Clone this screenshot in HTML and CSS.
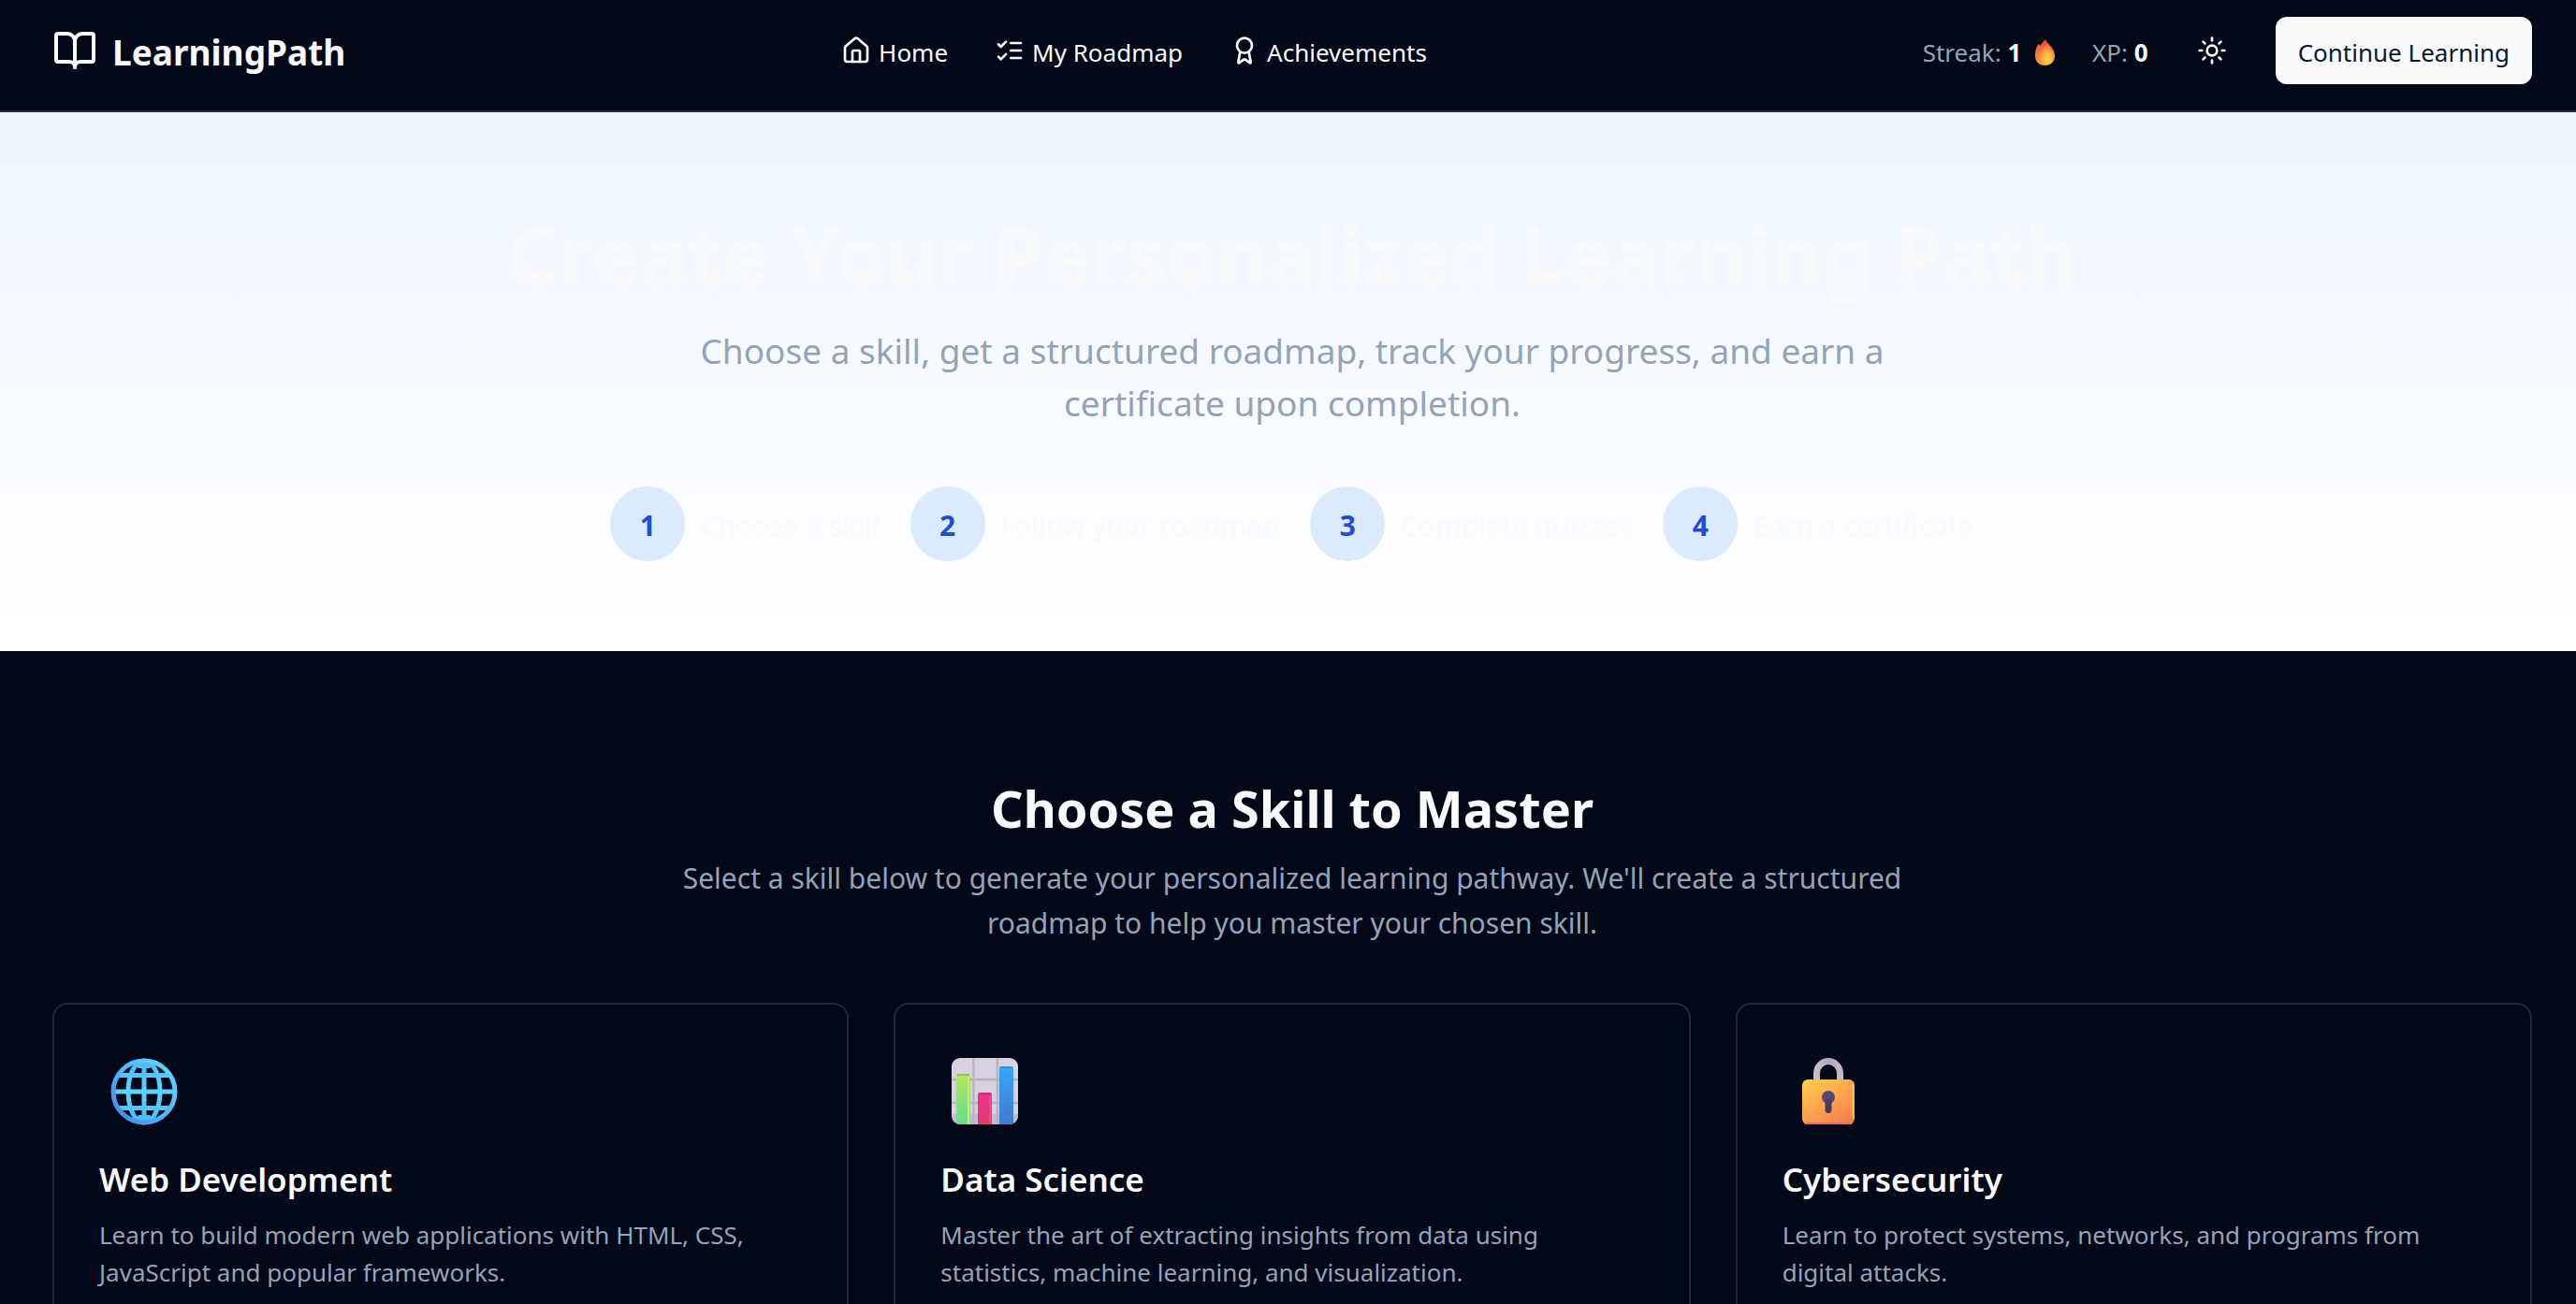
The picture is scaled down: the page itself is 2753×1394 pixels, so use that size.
FILE: index.html
```html
<!DOCTYPE html>
<html lang="en">
<head>
<meta charset="utf-8">
<meta name="viewport" content="width=device-width, initial-scale=1">
<title>LearningPath</title>
<link rel="stylesheet" href="styles.css">
</head>
<body>
<header class="header">
  <a class="logo" href="#">
    <svg class="icon icon-lg" viewBox="0 0 24 24" aria-hidden="true"><path d="M12 7v14"/><path d="M3 18a1 1 0 0 1-1-1V4a1 1 0 0 1 1-1h5a4 4 0 0 1 4 4 4 4 0 0 1 4-4h5a1 1 0 0 1 1 1v13a1 1 0 0 1-1 1h-6a3 3 0 0 0-3 3 3 3 0 0 0-3-3z"/></svg>
    <span class="label">LearningPath</span>
  </a>
  <nav class="nav" aria-label="Main">
    <a class="nav-link" href="#">
      <svg class="icon" viewBox="0 0 24 24" aria-hidden="true"><path d="M15 21v-8a1 1 0 0 0-1-1h-4a1 1 0 0 0-1 1v8"/><path d="M3 10a2 2 0 0 1 .709-1.528l7-5.999a2 2 0 0 1 2.582 0l7 5.999A2 2 0 0 1 21 10v9a2 2 0 0 1-2 2H5a2 2 0 0 1-2-2z"/></svg>
      <span class="label">Home</span>
    </a>
    <a class="nav-link" href="#">
      <svg class="icon" viewBox="0 0 24 24" aria-hidden="true"><path d="m3 17 2 2 4-4"/><path d="m3 7 2 2 4-4"/><path d="M13 6h8"/><path d="M13 12h8"/><path d="M13 18h8"/></svg>
      <span class="label">My Roadmap</span>
    </a>
    <a class="nav-link" href="#">
      <svg class="icon" viewBox="0 0 24 24" aria-hidden="true"><path d="m15.477 12.89 1.515 8.526a.5.5 0 0 1-.81.47l-3.58-2.687a1 1 0 0 0-1.197 0l-3.586 2.686a.5.5 0 0 1-.81-.469l1.514-8.526"/><circle cx="12" cy="8" r="6"/></svg>
      <span class="label">Achievements</span>
    </a>
  </nav>
  <div class="actions">
    <div class="stat label">Streak: <strong>1</strong>
      <svg class="flame" viewBox="0 0 21 28" role="img" aria-label="fire">
        <defs>
          <linearGradient id="flame-outer" x1="0" y1="0" x2="0" y2="1"><stop offset="0" stop-color="#e8443c"/><stop offset=".6" stop-color="#f9803c"/><stop offset="1" stop-color="#f79a3a"/></linearGradient>
          <radialGradient id="flame-inner" cx=".6" cy=".75" r=".65"><stop offset="0" stop-color="#ffd83c"/><stop offset=".5" stop-color="#ffb03e"/><stop offset="1" stop-color="#f8703e"/></radialGradient>
        </defs>
        <path fill="url(#flame-outer)" d="M10.500 0C12.500 4 21 9 21 17.500 21 24 16.500 28 10.500 28 4.500 28 0 24 0 17.500 0 13 1 8 3.500 5.500 4.500 5 5 6 5.500 7 6.500 4.500 8.500 3 10.500 0z"/>
        <path fill="url(#flame-inner)" d="M12 4C14 9 20 11 20 18 20 24 16 27.500 11 27.500 6 27.500 3.500 24 3.500 19 3.500 12 10.500 10 12 4z"/>
      </svg>
    </div>
    <div class="stat label">XP: <strong>0</strong></div>
    <button class="theme-toggle" type="button" aria-label="Toggle theme">
      <svg class="icon" viewBox="0 0 24 24" aria-hidden="true"><circle cx="12" cy="12" r="4"/><path d="M12 2v2"/><path d="M12 20v2"/><path d="m4.930 4.930 1.410 1.410"/><path d="m17.660 17.660 1.410 1.410"/><path d="M2 12h2"/><path d="M20 12h2"/><path d="m6.340 17.660-1.410 1.410"/><path d="m19.070 4.930-1.410 1.410"/></svg>
    </button>
    <button class="button" type="button"><span class="label">Continue Learning</span></button>
  </div>
</header>

<main>
  <section class="hero">
    <h1 class="hero-title">Create Your Personalized Learning Path</h1>
    <p class="hero-text">Choose a skill, get a structured roadmap, track your progress, and earn a certificate upon completion.</p>
    <ol class="steps">
      <li class="step"><span class="step-number">1</span><span class="label">Choose a skill</span></li>
      <li class="step"><span class="step-number">2</span><span class="label">Follow your roadmap</span></li>
      <li class="step"><span class="step-number">3</span><span class="label">Complete quizzes</span></li>
      <li class="step"><span class="step-number">4</span><span class="label">Earn a certificate</span></li>
    </ol>
  </section>

  <section class="skills">
    <h2 class="skills-title">Choose a Skill to Master</h2>
    <p class="skills-text">Select a skill below to generate your personalized learning pathway. We'll create a structured roadmap to help you master your chosen skill.</p>
    <div class="cards">
      <article class="card">
        <svg class="card-icon" viewBox="0 0 72 72" aria-hidden="true">
          <defs>
            <linearGradient id="globe-line" x1="0" y1="0" x2="0" y2="72" gradientUnits="userSpaceOnUse"><stop offset="0" stop-color="#48b8fb"/><stop offset=".5" stop-color="#5cd4ff"/><stop offset="1" stop-color="#4cb6fb"/></linearGradient>
            <linearGradient id="globe-rim" x1="1" y1="0" x2="0" y2="1"><stop offset="0" stop-color="#64dcfa"/><stop offset=".55" stop-color="#4cb4fa"/><stop offset="1" stop-color="#4480e0"/></linearGradient>
          </defs>
          <g fill="none" stroke="url(#globe-line)" stroke-width="5">
            <path d="M7 18.500H65M3 36.001H69M7 53.500H65M36.001 3V69"/>
            <ellipse cx="36" cy="36" rx="17" ry="33"/>
          </g>
          <path fill="url(#globe-line)" d="M24 5h24l-6 6H30zM24 67h24l-6-6H30z"/>
          <circle cx="36" cy="36" r="33" fill="none" stroke="url(#globe-rim)" stroke-width="5"/>
        </svg>
        <h3 class="card-title">Web Development</h3>
        <p class="card-text">Learn to build modern web applications with HTML, CSS, JavaScript and popular frameworks.</p>
      </article>
      <article class="card">
        <svg class="card-icon" viewBox="0 0 72 72" aria-hidden="true">
          <defs>
            <linearGradient id="bar-green" x1="0" y1="0" x2="0" y2="1"><stop offset="0" stop-color="#b4e65c"/><stop offset="1" stop-color="#62dc94"/></linearGradient>
            <linearGradient id="bar-pink" x1="0" y1="0" x2="0" y2="1"><stop offset="0" stop-color="#ee3090"/><stop offset="1" stop-color="#e23a68"/></linearGradient>
            <linearGradient id="bar-blue" x1="0" y1="0" x2="0" y2="1"><stop offset="0" stop-color="#38a8fa"/><stop offset="1" stop-color="#3f78cc"/></linearGradient>
            <clipPath id="chart-sheet"><rect width="71" height="71" rx="9"/></clipPath>
          </defs>
          <g clip-path="url(#chart-sheet)">
            <rect width="71" height="71" fill="#d8d1df"/>
            <path d="M0 60H71V71H0z" fill="#b8a4cc" opacity=".5"/>
            <path d="M0 23H71M0 48H71M23.500 0V71M49 0V71" stroke="#b9b3bd" stroke-width="2.500"/>
            <rect x="5" y="17" width="15" height="56" rx="2" fill="url(#bar-green)"/>
            <path d="M18 19V71" stroke="#c4f07a" stroke-width="2"/>
            <rect x="28" y="37" width="15" height="36" rx="2" fill="url(#bar-pink)"/>
            <path d="M41 40V71" stroke="#f04c8c" stroke-width="2"/>
            <rect x="51" y="9" width="15" height="64" rx="2" fill="url(#bar-blue)"/>
            <path d="M6 18H19M29 38H42M52 10H65" stroke="#33406a" stroke-width="2" opacity=".25"/>
          </g>
        </svg>
        <h3 class="card-title">Data Science</h3>
        <p class="card-text">Master the art of extracting insights from data using statistics, machine learning, and visualization.</p>
      </article>
      <article class="card">
        <svg class="card-icon" viewBox="0 0 72 72" aria-hidden="true">
          <defs>
            <linearGradient id="lock-body" x1=".15" y1="0" x2=".85" y2="1"><stop offset="0" stop-color="#ffca4a"/><stop offset=".55" stop-color="#fca04e"/><stop offset="1" stop-color="#f67c50"/></linearGradient>
            <linearGradient id="lock-shackle" x1="0" y1="0" x2="1" y2="0"><stop offset="0" stop-color="#c4c0c8"/><stop offset=".5" stop-color="#b4a8bc"/><stop offset="1" stop-color="#c0bcc4"/></linearGradient>
          </defs>
          <path d="M24.500 26V16.500a12.500 13 0 0 1 25 0V26" fill="none" stroke="url(#lock-shackle)" stroke-width="7"/>
          <rect x="9" y="23" width="56" height="48" rx="6" fill="url(#lock-body)"/>
          <path d="M63.500 28V65" stroke="#ffbe4c" stroke-width="2"/>
          <path d="M12 70H62" stroke="#ec6a5c" stroke-width="2"/>
          <circle cx="37" cy="42" r="7" fill="#544878"/>
          <rect x="33.500" y="44" width="7" height="15" rx="3.500" fill="#4a3a68"/>
        </svg>
        <h3 class="card-title">Cybersecurity</h3>
        <p class="card-text">Learn to protect systems, networks, and programs from digital attacks.</p>
      </article>
    </div>
  </section>
</main>
</body>
</html>
```
FILE: styles.css
```css
:root {
  --background: #020817;
  --foreground: #f8fafc;
  --muted: #94a3b8;
  --border: #1e293b;
}

* {
  box-sizing: border-box;
}

body {
  margin: 0;
  height: 100vh;
  overflow: hidden;
  background: var(--background);
  color: var(--foreground);
  font-family: "Noto Sans", "Open Sans", sans-serif;
  font-size: 26px;
  line-height: 40px;
}

h1, h2, h3, p, ol {
  margin: 0;
  padding: 0;
}

a {
  color: inherit;
  text-decoration: none;
}

button {
  border: 0;
  font: inherit;
  cursor: pointer;
}

.label {
  padding-top: 4px;
}

.icon {
  width: 32px;
  height: 32px;
  flex: none;
  fill: none;
  stroke: currentColor;
  stroke-width: 2;
  stroke-linecap: round;
  stroke-linejoin: round;
}

.icon-lg {
  width: 48px;
  height: 48px;
}

.header {
  display: flex;
  align-items: center;
  justify-content: space-between;
  padding: 18px 47px 28px 56px;
  border-bottom: 2px solid var(--border);
}

.logo {
  display: flex;
  align-items: center;
  gap: 16px;
  font-size: 37px;
  font-weight: 700;
}

.nav {
  display: flex;
  gap: 50px;
}

.nav-link {
  display: flex;
  align-items: center;
  gap: 8px;
}

.actions {
  display: flex;
  align-items: center;
  gap: 32px;
}

.stat {
  color: var(--muted);
}

.stat strong {
  color: var(--foreground);
}

.flame {
  width: 21px;
  height: 28px;
  margin: 0 8px;
  vertical-align: -4px;
}

.theme-toggle {
  display: flex;
  align-items: center;
  justify-content: center;
  width: 72px;
  height: 72px;
  padding: 0;
  background: transparent;
  color: inherit;
}

.button {
  display: flex;
  align-items: center;
  height: 72px;
  padding: 0 24px;
  border-radius: 12px;
  background: var(--foreground);
  color: #0f172a;
}

.hero {
  display: flex;
  flex-direction: column;
  align-items: center;
  padding: 96px 47px 96px 56px;
  background: linear-gradient(#eff6ff, #ffffff);
  text-align: center;
}

.hero-title {
  font-size: 85px;
  line-height: 110px;
}

.hero-text {
  max-width: 1344px;
  margin-top: 21px;
  color: var(--muted);
  font-size: 37px;
  line-height: 56px;
}

.steps {
  display: flex;
  gap: 33px;
  margin-top: 61px;
  list-style: none;
  font-size: 30px;
}

.step {
  display: flex;
  align-items: center;
  gap: 16px;
}

.step-number {
  display: flex;
  align-items: center;
  justify-content: center;
  width: 80px;
  height: 80px;
  padding-top: 4px;
  border-radius: 50%;
  background: #dbeafe;
  color: #1d4ed8;
  font-weight: 700;
}

.skills {
  padding: 138px 47px 96px 56px;
  text-align: center;
}

.skills-title {
  font-size: 54px;
  line-height: 60px;
}

.skills-text {
  max-width: 1344px;
  margin: 21px auto 61px;
  color: var(--muted);
  font-size: 30px;
  line-height: 48px;
}

.cards {
  display: grid;
  grid-template-columns: repeat(3, 1fr);
  gap: 48px;
  text-align: left;
}

.card {
  padding: 48px;
  border: 2px solid var(--border);
  border-radius: 16px;
}

.card-icon {
  display: block;
  width: 72px;
  height: 72px;
  margin: 9px 12px 34px;
}

.card-title {
  font-size: 35px;
  font-weight: 600;
  line-height: 48px;
}

.card-text {
  margin-top: 15px;
  color: var(--muted);
}
```
